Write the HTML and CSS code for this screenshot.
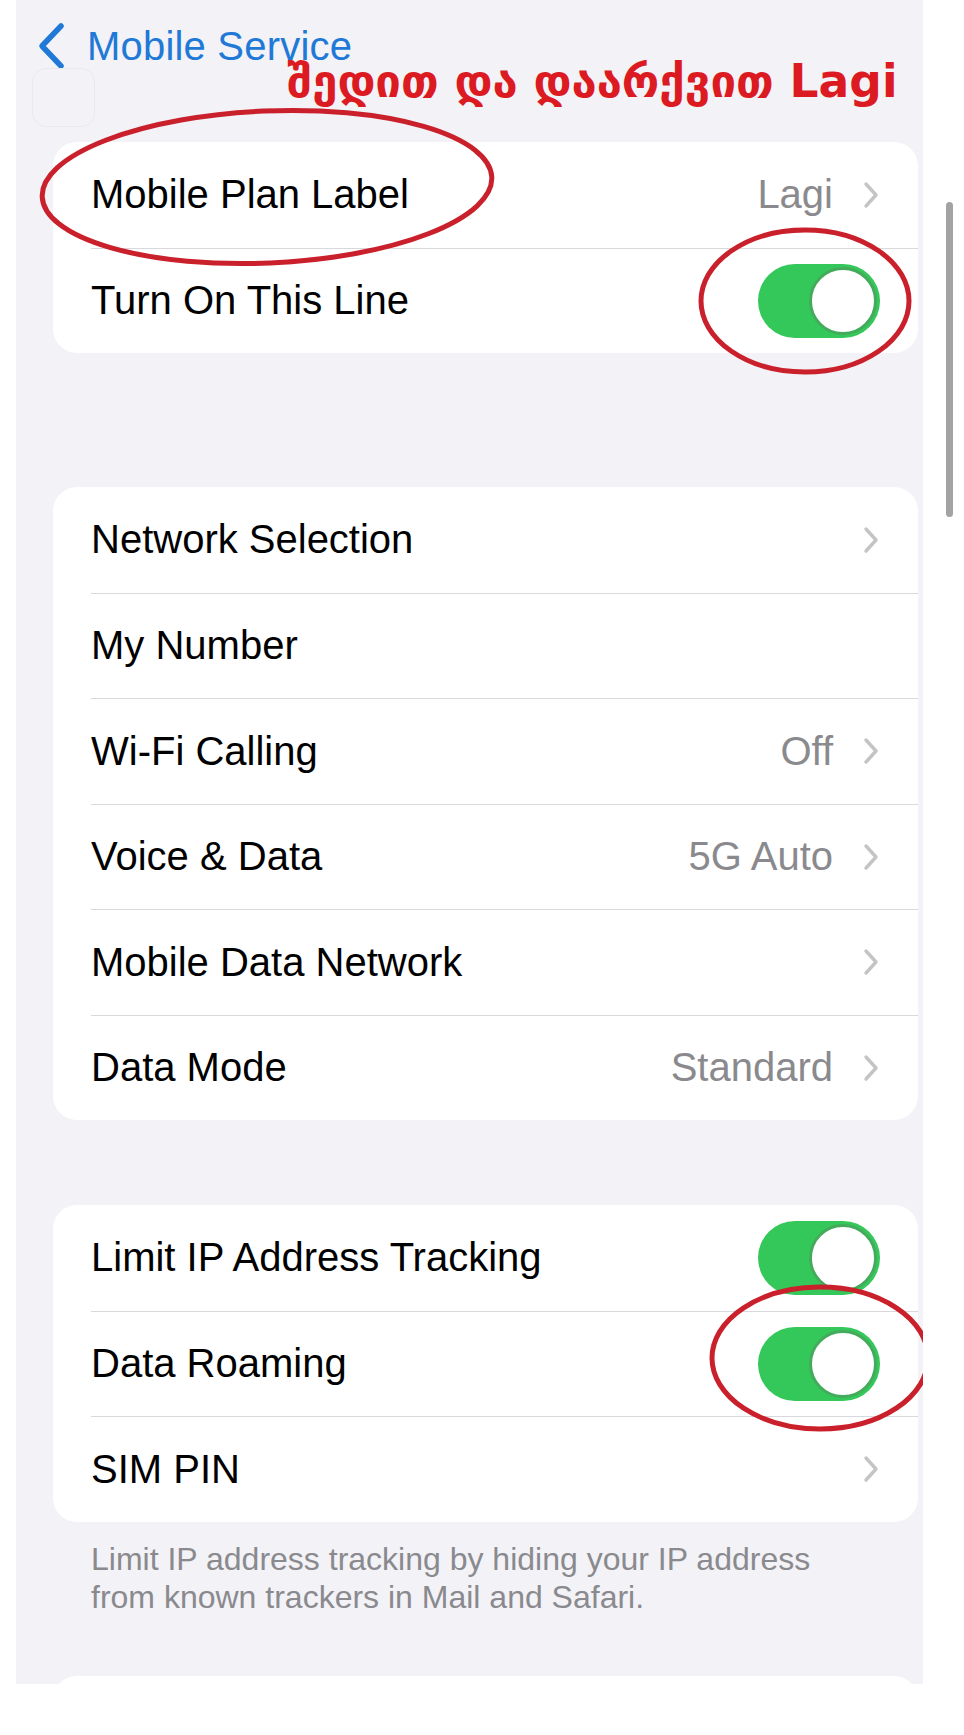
FILE: index.html
```html
<!DOCTYPE html>
<html lang="en">
<head>
<meta charset="utf-8">
<title>Mobile Plan</title>
<link rel="stylesheet" href="styles.css">
</head>
<body>
<div class="screen">
  <header class="nav">
    <svg class="back-icon" viewBox="0 0 28 48" width="28" height="48"><path d="M24 4 L5 24 L24 44" fill="none" stroke="#2079d6" stroke-width="5.5" stroke-linecap="round" stroke-linejoin="round"/></svg>
    <span class="back-label">Mobile Service</span>
  </header>
  <div class="ghost"></div>
  <div class="annotation">შედით და დაარქვით Lagi</div>

  <section class="card first">
    <div class="row"><span class="label">Mobile Plan Label</span><span class="value">Lagi</span><svg class="chev" viewBox="0 0 16 28" width="16" height="28"><path d="M3 3 L13 14 L3 25" fill="none" stroke="#c4c4c7" stroke-width="3.4" stroke-linecap="round" stroke-linejoin="round"/></svg></div>
    <div class="row"><span class="label">Turn On This Line</span><span class="toggle"><span class="knob"></span></span></div>
  </section>

  <section class="card second">
    <div class="row"><span class="label">Network Selection</span><svg class="chev" viewBox="0 0 16 28" width="16" height="28"><path d="M3 3 L13 14 L3 25" fill="none" stroke="#c4c4c7" stroke-width="3.4" stroke-linecap="round" stroke-linejoin="round"/></svg></div>
    <div class="row"><span class="label">My Number</span></div>
    <div class="row"><span class="label">Wi-Fi Calling</span><span class="value">Off</span><svg class="chev" viewBox="0 0 16 28" width="16" height="28"><path d="M3 3 L13 14 L3 25" fill="none" stroke="#c4c4c7" stroke-width="3.4" stroke-linecap="round" stroke-linejoin="round"/></svg></div>
    <div class="row"><span class="label">Voice &amp; Data</span><span class="value">5G Auto</span><svg class="chev" viewBox="0 0 16 28" width="16" height="28"><path d="M3 3 L13 14 L3 25" fill="none" stroke="#c4c4c7" stroke-width="3.4" stroke-linecap="round" stroke-linejoin="round"/></svg></div>
    <div class="row"><span class="label">Mobile Data Network</span><svg class="chev" viewBox="0 0 16 28" width="16" height="28"><path d="M3 3 L13 14 L3 25" fill="none" stroke="#c4c4c7" stroke-width="3.4" stroke-linecap="round" stroke-linejoin="round"/></svg></div>
    <div class="row"><span class="label">Data Mode</span><span class="value">Standard</span><svg class="chev" viewBox="0 0 16 28" width="16" height="28"><path d="M3 3 L13 14 L3 25" fill="none" stroke="#c4c4c7" stroke-width="3.4" stroke-linecap="round" stroke-linejoin="round"/></svg></div>
  </section>

  <section class="card third">
    <div class="row"><span class="label">Limit IP Address Tracking</span><span class="toggle"><span class="knob"></span></span></div>
    <div class="row"><span class="label">Data Roaming</span><span class="toggle"><span class="knob"></span></span></div>
    <div class="row"><span class="label">SIM PIN</span><svg class="chev" viewBox="0 0 16 28" width="16" height="28"><path d="M3 3 L13 14 L3 25" fill="none" stroke="#c4c4c7" stroke-width="3.4" stroke-linecap="round" stroke-linejoin="round"/></svg></div>
  </section>
  <p class="footnote">Limit IP address tracking by hiding your IP address from known trackers in Mail and Safari.</p>

  <section class="card fourth"></section>

  <svg class="marks" viewBox="0 0 907 1684" width="907" height="1684">
    <ellipse cx="251" cy="187" rx="225" ry="76" transform="rotate(-2.5 251 187)" fill="none" stroke="#c9202b" stroke-width="5"/>
    <ellipse cx="789" cy="301" rx="104" ry="71" fill="none" stroke="#c9202b" stroke-width="5"/>
    <ellipse cx="804" cy="1358" rx="108" ry="71" fill="none" stroke="#c9202b" stroke-width="5"/>
  </svg>
</div>
<div class="scrollbar"></div>
</body>
</html>
```

FILE: styles.css
```css
html, body {
  margin: 0;
  padding: 0;
  background: #ffffff;
}

body {
  position: relative;
  width: 964px;
  height: 1735px;
  overflow: hidden;
  font-family: "Liberation Sans", Arial, sans-serif;
}

.screen {
  position: relative;
  width: 907px;
  height: 1684px;
  margin-left: 16px;
  padding: 0 5px 0 37px;
  box-sizing: border-box;
  background: #f2f2f7;
  overflow: hidden;
}

.nav {
  display: flex;
  align-items: center;
  height: 92px;
  margin-left: -16px;
  gap: 22px;
  margin-bottom: 50px;
}

.back-icon {
  display: block;
  flex: none;
}

.back-label {
  color: #2079d6;
  font-size: 40px;
  letter-spacing: 0.2px;
}

.ghost {
  position: absolute;
  left: 16px;
  top: 68px;
  width: 61px;
  height: 57px;
  border: 1px solid #eaeaee;
  border-radius: 14px;
}

.annotation {
  position: absolute;
  left: 271px;
  top: 52px;
  color: #dc1a22;
  font-family: "DejaVu Sans", sans-serif;
  font-weight: bold;
  font-size: 45.5px;
  line-height: 60px;
  white-space: nowrap;
}

.card {
  background: #ffffff;
  border-radius: 24px;
  overflow: hidden;
}

.second {
  margin-top: 134px;
}

.third {
  margin-top: 85px;
}

.fourth {
  margin-top: 60px;
  height: 120px;
}

.row {
  display: flex;
  align-items: center;
  height: 105.5px;
  box-sizing: border-box;
  margin-left: 38px;
  padding-right: 38px;
  border-top: 1px solid #d9d9dd;
}

.row:first-child {
  border-top: none;
}

.label {
  flex: 1;
  color: #000000;
  font-size: 40px;
  white-space: nowrap;
}

.value {
  color: #8a8a8e;
  font-size: 40px;
  margin-right: 30px;
  white-space: nowrap;
}

.chev {
  display: block;
  flex: none;
  margin-right: 1px;
}

.toggle {
  position: relative;
  flex: none;
  width: 122px;
  height: 74px;
  border-radius: 37px;
  background: #34c759;
}

.knob {
  position: absolute;
  right: 3px;
  top: 3px;
  width: 62px;
  height: 62px;
  border-radius: 50%;
  background: #ffffff;
  border: 3px solid #45ab5c;
}

.footnote {
  margin: 0;
  padding: 18px 60px 0 38px;
  color: #8a8a8e;
  font-size: 32px;
  line-height: 38px;
}

.marks {
  position: absolute;
  left: 0;
  top: 0;
  pointer-events: none;
}

.scrollbar {
  position: absolute;
  left: 946px;
  top: 202px;
  width: 7px;
  height: 315px;
  border-radius: 4px;
  background: #a3a3a5;
}
```
